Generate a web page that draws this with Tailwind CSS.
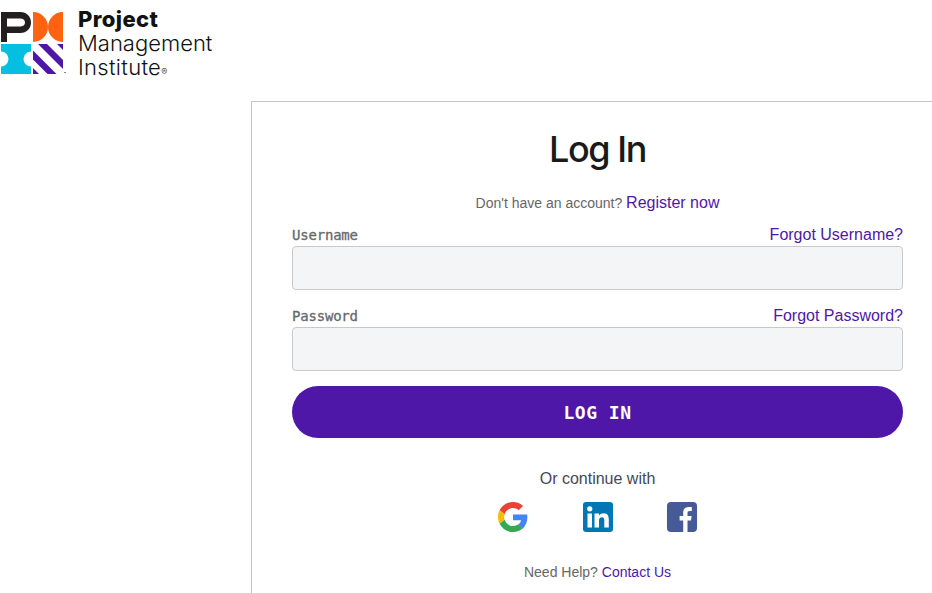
<!DOCTYPE html>
<html><head><meta charset="utf-8">
<script src="https://cdn.jsdelivr.net/npm/@tailwindcss/browser@4"></script>
</head>
<body class="bg-white overflow-hidden font-['Liberation_Sans',Arial,sans-serif]">
<div class="w-[932px] h-[593px] overflow-hidden flex flex-col">
  <header class="h-[101px] shrink-0 flex items-start pt-[12px]">
    <svg width="66" height="62" viewBox="0 0 66 62" class="shrink-0">
      <path fill="#231f20" fill-rule="evenodd" d="M1 0H20.500C26.500 0 31 4.500 31 10.500C31 16.500 26.500 21 20.500 21H7V30H1ZM7 6.500V14.500H20C23 14.500 25 13 25 10.500C25 8 23 6.500 20 6.500Z"/>
      <path fill="#ff6210" d="M33 0A15 15 0 0 1 48 15A15 15 0 0 1 33 30ZM63 0A15 15 0 0 0 48 15A15 15 0 0 0 63 30Z"/>
      <path fill="#05bfe0" fill-rule="evenodd" d="M1 32H31V39.500A7.500 7.500 0 0 0 31 54.500V62H1V54.500A7.500 7.500 0 0 0 1 39.500Z"/>
      <clipPath id="sq"><rect x="33" y="32" width="30" height="30"/></clipPath>
      <g fill="#4f17a8" clip-path="url(#sq)">
        <path d="M38 32H47L78 63H69Z"/>
        <path d="M57 32H70V45Z"/>
        <path d="M33 38.500V47.500L47.500 62H56.500Z"/>
        <path d="M33 56V62H39Z"/>
      </g>
      <rect x="64" y="60" width="2" height="1" fill="#888"/>
    </svg>
    <div class="ml-[12px] -mt-[5px] font-['Inter',sans-serif] text-[#111]">
      <div class="text-[22px] leading-[24px] font-extrabold h-[24px] tracking-[0.4px]">Project</div>
      <div class="text-[22px] leading-[24px] font-light h-[24px]">Management</div>
      <div class="text-[22px] leading-[24px] font-light h-[24px] tracking-[0.3px] flex items-baseline">Institute<span class="text-[9px] leading-none">®</span></div>
    </div>
  </header>
  <main class="ml-[251px] flex-1 border-l border-t border-[#c4c4c4] pl-[40px] pr-[29px] flex flex-col">
    <h1 class="font-['Inter',sans-serif] text-[36px] leading-[44px] font-medium text-[#1a1a1a] text-center mt-[25px] tracking-[-1.4px]">Log In</h1>
    <p class="text-center mt-[21px] leading-[22px] text-[14px] text-[#666]">Don't have an account? <a class="text-[16px] text-[#4f17a8]">Register now</a></p>
    <div class="flex justify-between items-end mt-[9px] h-[24px]">
      <label class="font-['DejaVu_Sans_Mono',monospace] text-[14px] leading-[20px] mb-[2px] text-[#66696b] tracking-[-0.2px] [-webkit-text-stroke:0.3px_#66696b]">Username</label>
      <a class="text-[16px] text-[#4f17a8]">Forgot Username?</a>
    </div>
    <div class="h-[44px] -mt-[1px] bg-[#f4f5f7] border border-[#c9c9c9] rounded-[4px]"></div>
    <div class="flex justify-between items-end mt-[14px] h-[24px]">
      <label class="font-['DejaVu_Sans_Mono',monospace] text-[14px] leading-[20px] mb-[2px] text-[#66696b] tracking-[-0.2px] [-webkit-text-stroke:0.3px_#66696b]">Password</label>
      <a class="text-[16px] text-[#4f17a8]">Forgot Password?</a>
    </div>
    <div class="h-[44px] -mt-[1px] bg-[#f4f5f7] border border-[#c9c9c9] rounded-[4px]"></div>
    <button class="mt-[15px] h-[52px] rounded-full bg-[#4f17a8] text-white font-['DejaVu_Sans_Mono',monospace] font-bold text-[18px] tracking-[0.5px]">LOG IN</button>
    <p class="text-center mt-[30px] text-[16px] leading-[22px] text-[#44485a]">Or continue with</p>
    <div class="flex justify-center gap-[54px] mt-[12px]">
      <svg width="30" height="30" viewBox="0 0 48 48" class="-ml-[1px] mr-[1px]">
        <path fill="#EA4335" d="M24 9.500c3.540 0 6.710 1.220 9.210 3.600l6.850-6.850C35.900 2.380 30.470 0 24 0 14.620 0 6.510 5.380 2.560 13.220l7.980 6.190C12.430 13.720 17.740 9.500 24 9.500z"/>
        <path fill="#4285F4" d="M46.980 24.550c0-1.570-.15-3.090-.38-4.550H24v9.020h12.940c-.58 2.960-2.260 5.480-4.780 7.180l7.730 6c4.510-4.180 7.090-10.360 7.090-17.650z"/>
        <path fill="#FBBC05" d="M10.530 28.590c-.48-1.450-.76-2.990-.76-4.590s.27-3.140.76-4.590l-7.980-6.190C.92 16.460 0 20.120 0 24c0 3.880.92 7.540 2.560 10.780l7.970-6.190z"/>
        <path fill="#34A853" d="M24 48c6.480 0 11.930-2.130 15.890-5.810l-7.730-6c-2.150 1.450-4.920 2.300-8.160 2.300-6.260 0-11.570-4.220-13.470-9.910l-7.980 6.190C6.510 42.620 14.620 48 24 48z"/>
      </svg>
      <svg width="30" height="30" viewBox="0 0 30 30">
        <rect width="30" height="30" rx="3" fill="#0077b5"/>
        <rect x="4.500" y="11.500" width="4.500" height="14" fill="#fff"/>
        <circle cx="6.750" cy="6.800" r="2.600" fill="#fff"/>
        <path fill="#fff" d="M11.500 11.500H16V13.500C16.800 12.200 18.300 11.200 20.500 11.200C24.800 11.200 25.800 14 25.800 17.800V25.500H21.300V18.700C21.300 16.900 21 15.200 18.900 15.200C16.800 15.200 16 16.800 16 18.600V25.500H11.500Z"/>
      </svg>
      <svg width="30" height="30" viewBox="0 0 30 30">
        <rect width="30" height="30" rx="4" fill="#455a96"/>
        <path fill="#fff" d="M20.500 30V18.500H24L24.600 14H20.500V11.300C20.500 10 20.900 9.100 22.700 9.100H24.800V5.100C24.400 5 23.100 4.900 21.600 4.900C18.400 4.900 16.200 6.800 16.200 10.400V14H12.600V18.500H16.200V30Z"/>
      </svg>
    </div>
    <p class="text-center mt-[30px] text-[14px] leading-[20px] text-[#666]">Need Help? <a class="text-[#4f17a8]">Contact Us</a></p>
  </main>
</div>
</body></html>
